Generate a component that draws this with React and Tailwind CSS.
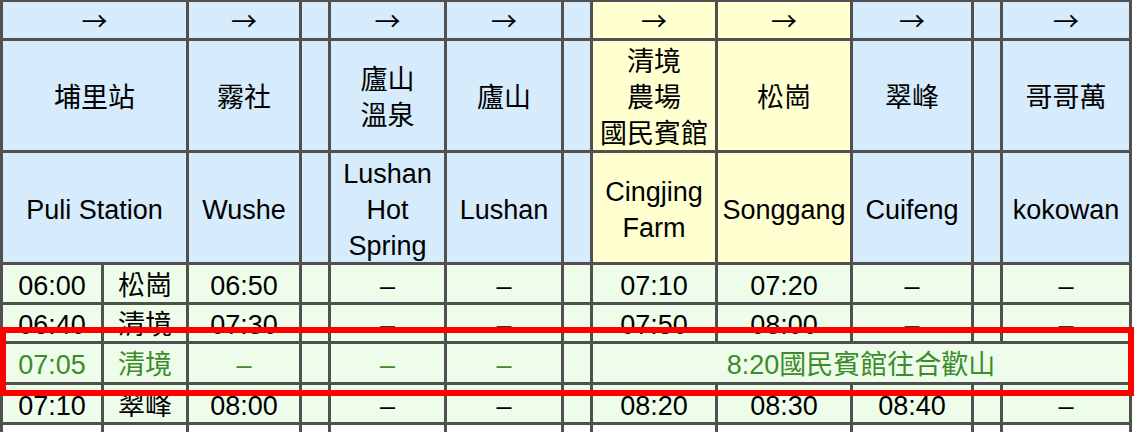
import React from 'react';

const BLUE = 'bg-[#d6ebfb]';
const YELLOW = 'bg-[#ffffd0]';
const GREEN = 'bg-[#edfdea]';

const headCols = [
  { span: true, zh: ['埔里站'], en: 'Puli Station', bg: BLUE, arrow: true },
  { zh: ['霧社'], en: 'Wushe', bg: BLUE, arrow: true },
  { zh: [], en: '', bg: BLUE, arrow: false },
  { zh: ['廬山', '溫泉'], en: 'Lushan Hot Spring', bg: BLUE, arrow: true },
  { zh: ['廬山'], en: 'Lushan', bg: BLUE, arrow: true },
  { zh: [], en: '', bg: BLUE, arrow: false },
  { zh: ['清境', '農場', '國民賓館'], en: 'Cingjing Farm', bg: YELLOW, arrow: true },
  { zh: ['松崗'], en: 'Songgang', bg: YELLOW, arrow: true },
  { zh: ['翠峰'], en: 'Cuifeng', bg: BLUE, arrow: true },
  { zh: [], en: '', bg: BLUE, arrow: false },
  { zh: ['哥哥萬'], en: 'kokowan', bg: BLUE, arrow: true },
];

const rows = [
  ['06:00', '松崗', '06:50', '', '–', '–', '', '07:10', '07:20', '–', '', '–'],
  ['06:40', '清境', '07:30', '', '–', '–', '', '07:50', '08:00', '–', '', '–'],
  null,
  ['07:10', '翠峰', '08:00', '', '–', '–', '', '08:20', '08:30', '08:40', '', '–'],
];

function Cell({ className = '', children }) {
  return (
    <div className={`flex items-center justify-center text-center ${className}`}>
      {children}
    </div>
  );
}

export default function App() {
  return (
    <div
      className="relative h-[432px] w-[1134px] overflow-hidden bg-white text-[27px] leading-[36px] text-black"
      style={{ fontFamily: '"Liberation Sans", "Noto Sans CJK TC", sans-serif' }}
    >
      <div className="grid w-[1132px] grid-cols-[98px_82px_110px_26px_113px_114px_26px_122px_132px_118px_26px_126px] grid-rows-[36px_109px_109px_37px_36px_38px_37px_37px] gap-[3px] bg-[#505050] px-[3px] pt-[2px]">
        {/* arrows */}
        {headCols.map((c, i) => (
          <Cell key={'a' + i} className={`${c.bg} ${c.span ? 'col-span-2' : ''}`}>
            {c.arrow && <span className="font-['Noto_Sans_CJK_TC'] text-[26px]">→</span>}
          </Cell>
        ))}

        {/* chinese names */}
        {headCols.map((c, i) => (
          <Cell key={'z' + i} className={`${c.bg} ${c.span ? 'col-span-2' : ''} flex-col pt-[4px]`}>
            {c.zh.map((l) => (
              <span key={l}>{l}</span>
            ))}
          </Cell>
        ))}

        {/* english names */}
        {headCols.map((c, i) => (
          <Cell key={'e' + i} className={`${c.bg} ${c.span ? 'col-span-2' : ''} px-1 pt-[4px]`}>
            {c.en}
          </Cell>
        ))}

        {/* timetable */}
        {rows.map((r, ri) =>
          r ? (
            r.map((v, ci) => (
              <Cell key={ri + '-' + ci} className={`${GREEN} pt-[4px]`}>
                {v}
              </Cell>
            ))
          ) : (
            <React.Fragment key={ri}>
              {['07:05', '清境', '–', '', '–', '–', ''].map((v, ci) => (
                <Cell key={'g' + ci} className={`${GREEN} pt-[4px] text-[#3d8b2c]`}>
                  {v}
                </Cell>
              ))}
              <Cell className={`${GREEN} col-span-5 pt-[4px] text-[#3d8b2c]`}>8:20國民賓館往合歡山</Cell>
            </React.Fragment>
          )
        )}

        {/* next row, cut off */}
        {Array.from({ length: 12 }).map((_, i) => (
          <div key={'w' + i} className="bg-white" />
        ))}
      </div>

      {/* highlight box */}
      <div className="absolute left-0 top-[327px] h-[69px] w-[1134px] border-[6px] border-[#ff0000]" />
    </div>
  );
}
